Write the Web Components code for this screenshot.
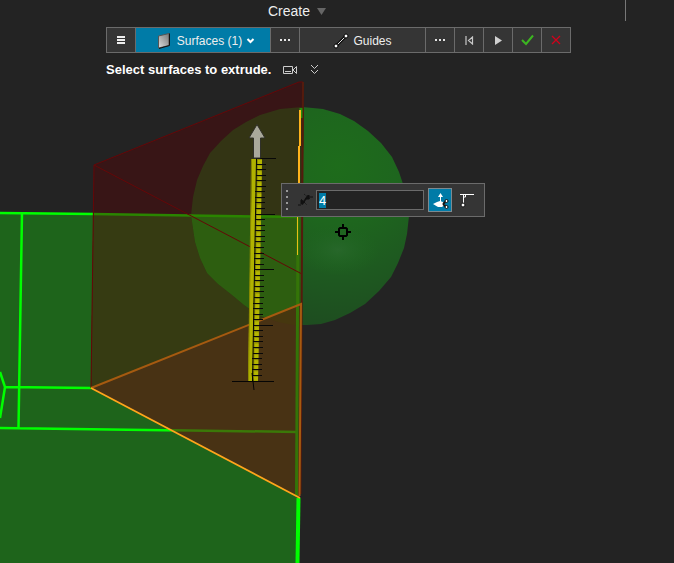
<!DOCTYPE html>
<html lang="en">
<head>
<meta charset="utf-8">
<title>Extrude</title>
<style>
html, body { margin: 0; height: 100%; }
body { background: #232323; color: #eee; font-family: "Liberation Sans", Arial, sans-serif; font-size: 12px; overflow: hidden; }
</style>
</head>
<body>
<modeling-window></modeling-window>
<script>
const define = (name, html, ready) => {
  const template = document.createElement('template');
  template.innerHTML = html;
  customElements.define(name, class extends HTMLElement {
    constructor() {
      super();
      this.attachShadow({ mode: 'open' }).append(template.content.cloneNode(true));
    }
    connectedCallback() { if (ready) ready(this.shadowRoot, this); }
  });
};

define('modeling-window', `
<style>
:host { display: block; position: relative; height: 100%; }
scene-view { position: absolute; inset: 0; }
.chrome { position: relative; display: grid; justify-items: center; }
.stack { display: grid; gap: 8px; padding: 6px 0 0 3px; }
value-palette { position: absolute; left: 281px; top: 183px; }
</style>
<scene-view></scene-view>
<div class="chrome">
  <title-strip></title-strip>
  <div class="stack">
    <command-bar></command-bar>
    <hint-line>Select surfaces to extrude.</hint-line>
  </div>
</div>
<value-palette></value-palette>`);

define('title-strip', `
<style>
:host { display: flex; width: 100%; height: 21px; }
.menu { flex: 1; display: flex; justify-content: center; padding-right: 30px; border-right: 1px solid #777; }
.rest { width: 48px; }
button { display: flex; align-items: center; gap: 6px; border: 0; padding: 0; background: none; color: #eee; font: 14px "Liberation Sans", Arial, sans-serif; }
</style>
<div class="menu"><button>Create <svg width="11" height="8"><path d="M1 1H10L5.5 8Z" fill="#666"/></svg></button></div>
<div class="rest"></div>`);

define('tool-cell', `
<style>
:host { display: block; width: 29px; box-sizing: border-box; border-left: 1px solid #6b6b6b; }
:host([kind="surfaces"]) { width: 135px; }
:host([kind="guides"]) { width: 126px; }
button { width: 100%; height: 24px; padding: 0; border: 0; display: flex; align-items: center; justify-content: center; gap: 4px; background: #353535; color: #eee; font: 12px "Liberation Sans", Arial, sans-serif; }
:host([kind="surfaces"]) button { background: #007ba7; padding: 2px 0 0 6px; }
:host([kind="guides"]) button { padding-top: 2px; }
</style>
<button><slot></slot></button>`, (root, host) => {
  root.querySelector('button').setAttribute('aria-label', host.getAttribute('name'));
});

define('command-bar', `
<style>
:host { display: flex; border: solid #6b6b6b; border-width: 1px 1px 1px 0; }
svg { display: block; flex: none; }
.face { margin-right: 2px; }
</style>
<tool-cell name="Menu"><svg width="8" height="8"><path d="M0 1H8M0 4H8M0 7H8" stroke="#eee" stroke-width="2"/></svg></tool-cell>
<tool-cell kind="surfaces" name="Surfaces (1)"><svg class="face" width="14" height="16" viewBox="0 0 14 16"><defs><linearGradient id="face" x1="1" y1="0" x2="0" y2="1"><stop stop-color="#777"/><stop offset="1" stop-color="#ddd"/></linearGradient></defs><path d="M1.500 3L12 .5V12.500L1.500 15Z" fill="url(#face)" stroke="#555"/><path d="M12.500 .5V12.500L2 15.500" stroke="#111" fill="none"/></svg><span>Surfaces (1)</span><svg width="9" height="8"><path d="M1.500 2L4.500 5L7.500 2" fill="none" stroke="#fff" stroke-width="2"/></svg></tool-cell>
<tool-cell name="Surface options"><svg width="11" height="3"><path d="M0 1H2M4 1H6M8 1H10" stroke="#e5e5e5" stroke-width="2"/></svg></tool-cell>
<tool-cell kind="guides" name="Guides"><svg width="16" height="16"><path d="M3 13L13 3" stroke="#111" stroke-width="3"/><path d="M3 13L13 3" stroke="#ddd" stroke-width="1"/><circle cx="3" cy="13" r="2" fill="#fff" stroke="#000"/><circle cx="13" cy="3" r="2" fill="#fff" stroke="#000"/></svg><span>Guides</span></tool-cell>
<tool-cell name="Guide options"><svg width="11" height="3"><path d="M0 1H2M4 1H6M8 1H10" stroke="#e5e5e5" stroke-width="2"/></svg></tool-cell>
<tool-cell name="Restart"><svg width="9" height="9"><path d="M1 0V9M7.500 1V8L3.500 4.500Z" fill="none" stroke="#c8c8c8" stroke-width="1.200"/></svg></tool-cell>
<tool-cell name="Play"><svg width="9" height="9"><path d="M1 0L8 4.500L1 9Z" fill="#d0d0d0"/></svg></tool-cell>
<tool-cell name="Accept"><svg width="13" height="12"><path d="M1 6L5 10L12 1.500" fill="none" stroke="#3cb521" stroke-width="2"/></svg></tool-cell>
<tool-cell name="Cancel"><svg width="10" height="10"><path d="M1 1L9 9M9 1L1 9" stroke="#d0021b" stroke-width="1.300"/></svg></tool-cell>`);

define('hint-line', `
<style>
:host { display: flex; align-items: center; height: 17px; font-size: 13px; font-weight: bold; color: #fff; }
.camera { margin-left: 12px; }
.more { margin-left: 12px; }
</style>
<slot></slot>
<svg class="camera" width="15" height="10"><path d="M.5 1.500H9.500V8.500H.5ZM2 6.500H8M10 5L13.500 1.500V8.500L10 5" fill="none" stroke="#ccc"/></svg>
<svg class="more" width="9" height="11"><path d="M1 1L4.500 4.500L8 1M1 6L4.500 9.500L8 6" fill="none" stroke="#ccc"/></svg>`);

define('value-palette', `
<style>
:host { display: flex; align-items: center; box-sizing: border-box; height: 34px; padding: 0 4px; border: 1px solid #6b6b6b; background: #353535; }
svg { display: block; }
.size { margin: 0 3px 0 8px; }
input { box-sizing: border-box; width: 108px; height: 20px; padding: 0 2px; border: 1px solid #6b6b6b; outline: 0; background: #232323; color: #fff; font: 13px "Liberation Sans", Arial, sans-serif; }
input::selection { background: rgba(0, 123, 167, .996); color: #fff; }
button { box-sizing: border-box; width: 24px; height: 24px; padding: 0; margin-left: 4px; border: 1px solid transparent; background: none; display: grid; place-items: center; }
button.on { background: #007ba7; border-color: #7d8a90; }
</style>
<svg width="3" height="22"><path d="M0 2H2M0 8H2M0 14H2M0 20H2" stroke="#999" stroke-width="2"/></svg>
<label class="size" for="distance" aria-label="Distance"><svg width="16" height="16"><path d="M5 12.500L11 3.500" stroke="#111" stroke-width="1.500"/><path d="M4 7L10 13M7 2L13 7" stroke="#1a1a1a" stroke-dasharray="2 1"/><path d="M4 12V8L8 10ZM8 7L12 3V7ZM1 13H4M12 5H16" stroke="#111" fill="#111"/></svg></label>
<input id="distance" value="4">
<button class="on" aria-label="Direction"><svg width="22" height="22"><path d="M11.500 6V14" stroke="#fff"/><path d="M11.500 4L14 8H9Z" fill="#fff"/><path d="M4 15L8 13L11 12L14 13L16 15.500L13 18H9Z" fill="#fff"/><path d="M14 15L18 11.500M14 15L18 18.500" stroke="#111" stroke-width="2"/><circle cx="17.500" cy="12" r="1.500" fill="#fff" stroke="#111"/><circle cx="17.500" cy="18" r="1.500" fill="#fff" stroke="#111"/></svg></button>
<button aria-label="Draft"><svg width="22" height="22"><path d="M3 5.500H17M6.500 5.500V14M6.500 8H8.500V5.500" fill="none" stroke="#fff"/><circle cx="6" cy="16" r="2" fill="#fff" stroke="#111"/></svg></button>`, root => {
  const input = root.querySelector('input');
  input.focus({ preventScroll: true });
  input.select();
});

define('scene-view', `
<style>
:host { display: block; overflow: hidden; }
svg { display: block; width: 100%; height: 100%; }
</style>
<svg viewBox="0 0 674 563" preserveAspectRatio="xMinYMin slice" fill="none" aria-label="Extrusion preview">
  <defs>
    <radialGradient id="glow" gradientUnits="userSpaceOnUse" cx="338" cy="165" r="165"><stop stop-color="#1e6c1b"/><stop offset=".35" stop-color="#1e661e"/><stop offset=".65" stop-color="#1e5a20"/><stop offset="1" stop-color="#1e4c20"/></radialGradient>
    <radialGradient id="soft"><stop stop-color="#27672a"/><stop offset="1" stop-color="#1e651f" stop-opacity="0"/></radialGradient>
    <clipPath id="sideClip"><path d="M94 165L299 82H304L301 304L91 388Z"/></clipPath>
    <clipPath id="baseClip"><path d="M91 388L301 304L300 498Z"/></clipPath>
    <clipPath id="bodyClip"><path d="M0 213L303 217V563H0Z"/></clipPath>
    <path id="ball" d="M302 107L323 109L340 114L354 121L368 131L381 143L392 157L399 172L405 190L409 216L407 234L404 248L398 263L391 277L379 291L365 304L350 313L335 320L321 324L307 325L293 325L278 322L258 315L244 305L232 295L218 284L207 273L200 258L195 242L191 215L193 197L197 180L203 166L210 153L221 141L233 130L246 122L260 115L280 109Z"/>
  </defs>
  <path d="M0 213L298 217V563H0Z" fill="#1e641b"/>
  <use href="#ball" fill="url(#glow)"/>
  <ellipse cx="338" cy="250" rx="42" ry="26" fill="url(#soft)"/>
  <path d="M0 213L94 214M22 213L18.500 428M5 387L91 388M0 372L5 387L0 418M0 428L298 432" stroke="#0f0" stroke-width="2.500"/>
  <path d="M298.500 498L297.500 563" stroke="#0f0" stroke-width="4"/>

  <g clip-path="url(#sideClip)">
    <path d="M80 70H310V400H80Z" fill="#381516"/>
    <path d="M0 213L303 217V563H0Z" fill="#363b12"/>
    <use href="#ball" fill="#333414"/>
    <g clip-path="url(#bodyClip)"><use href="#ball" fill="#2d5e10"/></g>
    <path d="M90 214L298 217" stroke="#2a8500" stroke-width="2.500"/>
  </g>
  <g clip-path="url(#baseClip)">
    <path d="M91 388L301 304L300 498Z" fill="#483214"/>
    <use href="#ball" fill="#46370f"/>
    <path d="M90 429L298 432" stroke="#3b7808" stroke-width="2.500"/>
  </g>
  <path d="M298 217L296.500 496" stroke="#347408" stroke-width="3"/>
  <path d="M94 165L299 82H303M94 165L302 274M94 165L91 388" stroke="#650708" stroke-width="1"/>
  <path d="M303 82L300.500 494" stroke="#541b0d" stroke-width="2"/>
  <path d="M91 388L301 304L299.500 496" stroke="#a65a10" stroke-width="2"/>
  <path d="M91 388L300 498" stroke="#ffa51c" stroke-width="1.800"/>
  <path d="M301 108V118" stroke="#258d0b" stroke-width="3"/>
  <path d="M300 110V146M299 146V184" stroke="#ffb41c" stroke-width="2"/>
  <path d="M297.500 216V255" stroke="#e8bd18"/>

  <path d="M252 159H257L253 381H248Z" fill="#b0b200"/>
  <path d="M251 159H252L249 381H248Z" fill="#8c8a00"/>
  <path d="M257 159H262L258 381H253Z" fill="#8c8b00"/>
  <path d="M260 159L256 381" stroke="#b4b600" stroke-width="4" stroke-dasharray="4 1.560" stroke-dashoffset="-1"/>
  <path d="M256.500 159L252.500 381" stroke="#050505"/>
  <g id="ticks" stroke="#080808"></g>
  <path d="M232 381.500H274M252 373L254 390" stroke="#050505"/>
  <path d="M257 124.500L249 138H253.500V158H260.500V138H265Z" fill="#aaa99b" stroke="#303029"/>

  <path d="M343 224V228M343 236V240M335 232H339M347 232H351M340 228H346L347 229V235L346 236H340L339 235V229Z" stroke="#000" stroke-width="2"/>
</svg>`, root => {
  let lines = '';
  for (let i = 0; i < 40; i++) {
    const y = Math.round(158 + i * 5.56) + .5;
    const x = Math.round(256 - i * .1);
    lines += `<path d="M${x} ${y}H${x + (i % 10 ? 10 : 20)}"/>`;
  }
  root.querySelector('#ticks').innerHTML = lines;
});
</script>
</body>
</html>
